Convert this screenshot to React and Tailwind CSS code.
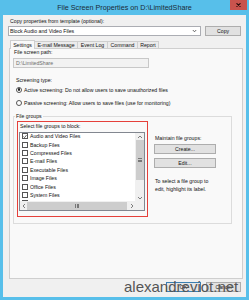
import React from 'react';

const groups = [
  'Audio and Video Files',
  'Backup Files',
  'Compressed Files',
  'E-mail Files',
  'Executable Files',
  'Image Files',
  'Office Files',
  'System Files',
  'Temporary Files',
];

function Arrow({ dir }) {
  const pts = {
    up: '1,4 3,2 5,4',
    down: '1,2 3,4 5,2',
    left: '4,1 2,3 4,5',
    right: '2,1 4,3 2,5',
  }[dir];
  return (
    <svg width="6" height="6" viewBox="0 0 6 6">
      <polyline points={pts} fill="none" stroke="#606060" strokeWidth="0.8" />
    </svg>
  );
}

export default function App() {
  return (
    <div className="w-[249px] h-[300px] bg-[#57bfea] flex flex-col px-[3px] pb-[3px] font-['Liberation_Sans',Arial,sans-serif] text-[#111]">
      {/* title bar */}
      <div className="relative h-[15px] shrink-0 flex items-center justify-center text-[7.2px] leading-[8px] text-[#1b2b36]">
        File Screen Properties on D:\LimitedShare
        <div className="absolute top-0 right-[-1px] w-[17px] h-[10px] bg-[#c9534d] flex items-center justify-center">
          <svg width="5" height="4" viewBox="0 0 5 4">
            <path d="M0.5 0.3L4.5 3.7M4.5 0.3L0.5 3.7" stroke="#2a0d0b" strokeWidth="1.1" />
          </svg>
        </div>
      </div>

      <div className="relative flex-1 bg-[#f0f0f0] px-[5px] pt-[3px] flex flex-col text-[5.2px] leading-[6px]">
        <div className="ml-[2px] h-[6px]">Copy properties from template (optional):</div>

        <div className="mt-[2px] flex h-[10px]">
          <div className="w-[194px] h-full bg-white border border-[#abadb3] flex items-center pl-[1px] pr-[3px]">
            <span className="flex-1">Block Audio and Video Files</span>
            <svg width="5" height="4" viewBox="0 0 5 4">
              <polyline points="0.8,1 2.5,2.8 4.2,1" fill="none" stroke="#444" strokeWidth="0.8" />
            </svg>
          </div>
          <button className="ml-[4px] w-[36px] h-full bg-[#e1e1e1] border border-[#adadad] flex items-center justify-center">
            Copy
          </button>
        </div>

        {/* tabs */}
        <div className="relative z-10 mt-[4px] ml-[2px] flex items-end h-[8px]">
          <div className="w-[25px] h-[9px] -mb-[1px] bg-[#f9f9f9] border border-b-0 border-[#cfcfcf] flex items-center justify-center">
            Settings
          </div>
          <div className="w-[43px] h-[7px] bg-[#ececec] border-t border-r border-[#cfcfcf] flex items-center justify-center">
            E-mail Message
          </div>
          <div className="w-[30px] h-[7px] bg-[#ececec] border-t border-r border-[#cfcfcf] flex items-center justify-center">
            Event Log
          </div>
          <div className="w-[30px] h-[7px] bg-[#ececec] border-t border-r border-[#cfcfcf] flex items-center justify-center">
            Command
          </div>
          <div className="w-[21px] h-[7px] bg-[#ececec] border-t border-r border-[#cfcfcf] flex items-center justify-center">
            Report
          </div>
        </div>

        {/* tab page */}
        <div className="ml-[1px] w-[234px] h-[231px] shrink-0 border border-[#cfcfcf] bg-[#f9f9f9] pl-[3px] flex flex-col">
          <div className="ml-[1px] h-[6px]">File screen path:</div>
          <div className="mt-[3px] w-[136px] h-[10px] border border-[#c8c8c8] bg-[#f2f2f2] flex items-center pl-[2px] text-[#6d6d6d]">
            {'D:\\LimitedShare'}
          </div>

          <div className="mt-[9px] ml-[3px] h-[6px]">Screening type:</div>
          <div className="mt-[3px] ml-[3px] h-[7px] flex items-center gap-[2px]">
            <span className="w-[6px] h-[6px] rounded-full border border-[#555] bg-white flex items-center justify-center">
              <span className="w-[2.5px] h-[2.5px] rounded-full bg-[#222]" />
            </span>
            Active screening: Do not allow users to save unauthorized files
          </div>
          <div className="mt-[6.5px] ml-[3px] h-[7px] flex items-center gap-[2px]">
            <span className="w-[6px] h-[6px] rounded-full border border-[#555] bg-white" />
            Passive screening: Allow users to save files (use for monitoring)
          </div>

          {/* group box */}
          <div className="relative mt-[9.5px] w-[219px] h-[108px] border border-[#dcdcdc] flex pt-[4px] pl-[3px]">
            <span className="absolute left-[1px] top-[-4px] px-[1px] bg-[#f9f9f9]">File groups</span>

            <div className="w-[131px] h-[96px] border border-[#e5403a] flex flex-col">
              <div className="pl-[2px] pt-[1px] h-[7px]">Select file groups to block:</div>
              <div className="mt-[3px] ml-[1px] w-[126px] h-[79px] border border-[#828790] bg-white grid grid-cols-[1fr_9px] grid-rows-[1fr_9px] overflow-hidden">
                <div className="overflow-hidden">
                  <div className="-mt-[1px] flex flex-col">
                    {groups.map((g, i) => (
                      <div key={g} className="h-[8.4px] shrink-0 flex items-center pl-[2px] gap-[2px] whitespace-nowrap">
                        <span className="w-[6px] h-[6px] shrink-0 border border-[#555] bg-white flex items-center justify-center">
                          {i === 0 && (
                            <svg width="5" height="5" viewBox="0 0 5 5">
                              <polyline points="0.6,2.6 1.9,3.9 4.4,0.8" fill="none" stroke="#222" strokeWidth="0.9" />
                            </svg>
                          )}
                        </span>
                        {g}
                      </div>
                    ))}
                  </div>
                </div>

                <div className="bg-[#f0f0f0] flex flex-col items-center">
                  <div className="h-[7px] flex items-center"><Arrow dir="up" /></div>
                  <div className="w-[8px] h-[40px] bg-[#cdcdcd] flex flex-col items-center justify-center gap-[0.8px]">
                    <span className="w-[4px] h-[0.6px] bg-[#777]" />
                    <span className="w-[4px] h-[0.6px] bg-[#777]" />
                    <span className="w-[4px] h-[0.6px] bg-[#777]" />
                  </div>
                  <div className="flex-1" />
                  <div className="h-[7px] flex items-center"><Arrow dir="down" /></div>
                </div>

                <div className="bg-[#f0f0f0] flex items-center">
                  <div className="w-[7px] flex justify-center"><Arrow dir="left" /></div>
                  <div className="w-[100px] h-[8px] bg-[#cdcdcd] flex items-center justify-center gap-[0.8px]">
                    <span className="w-[0.6px] h-[4px] bg-[#777]" />
                    <span className="w-[0.6px] h-[4px] bg-[#777]" />
                    <span className="w-[0.6px] h-[4px] bg-[#777]" />
                  </div>
                  <div className="flex-1" />
                  <div className="w-[7px] flex justify-center"><Arrow dir="right" /></div>
                </div>
                <div className="bg-[#f0f0f0]" />
              </div>
            </div>

            <div className="ml-[6px] mt-[14px] flex flex-col">
              <div className="ml-[1px] h-[6px]">Maintain file groups:</div>
              <button className="mt-[3px] w-[62px] h-[10px] bg-[#e1e1e1] border border-[#adadad] flex items-center justify-center">
                Create...
              </button>
              <button className="mt-[4px] w-[62px] h-[10px] bg-[#e1e1e1] border border-[#adadad] flex items-center justify-center">
                Edit...
              </button>
              <div className="mt-[9px] ml-[1px] leading-[8px]">
                To select a file group to
                <br />
                edit, highlight its label.
              </div>
            </div>
          </div>
        </div>

        {/* dialog buttons */}
        <div className="mt-[3px] h-[10px] flex justify-end gap-[5px]">
          <button className="w-[35px] h-full bg-[#e5e5e5] border border-[#3c7fb1] flex items-center justify-center">OK</button>
          <button className="w-[35px] h-full bg-[#e1e1e1] border border-[#adadad] flex items-center justify-center">Cancel</button>
        </div>

        <div className="absolute left-[121px] top-[264px] text-[15px] leading-[15px] text-[#555] whitespace-nowrap">
          alexandreviot.net
        </div>
      </div>
    </div>
  );
}
